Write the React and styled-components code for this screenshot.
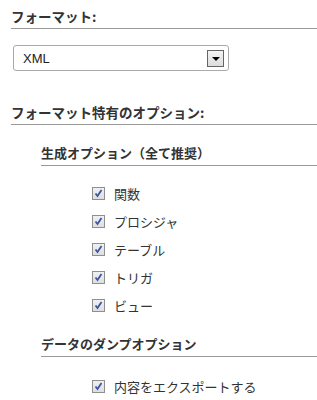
import React from "react";
import styled, { createGlobalStyle } from "styled-components";

const GlobalStyle = createGlobalStyle`
  body {
    margin: 0;
    background: #fff;
    font-family: "Noto Sans CJK JP", "Noto Sans", sans-serif;
    color: #333;
  }
`;

const Page = styled.div`
  width: 317px;
  height: 400px;
  overflow: hidden;
  padding: 7px 0 0 11px;
  box-sizing: border-box;
`;

const Heading = styled.div`
  font-size: ${({ fs }) => fs || "13px"};
  font-weight: bold;
  line-height: 18px;
  color: #333;
  padding-bottom: 3px;
  border-bottom: 1px solid #999;
  margin-left: ${({ indent }) => indent || "0"};
  margin-top: ${({ mt }) => mt || "0"};
`;

const SelectBox = styled.div`
  margin: 16px 0 0 2px;
  width: 216px;
  height: 26px;
  box-sizing: border-box;
  border: 1px solid #aaa;
  border-radius: 3px;
  display: flex;
  align-items: center;
  justify-content: space-between;
  padding: 0 4px 0 9px;
  font-family: "Liberation Sans", Arial, sans-serif;
  font-size: 13px;
  color: #222;
`;

const ArrowButton = styled.div`
  width: 17px;
  height: 17px;
  box-sizing: border-box;
  border: 1px solid #666;
  background: linear-gradient(#f4f4f4, #dcdcdc);
  display: flex;
  align-items: center;
  justify-content: center;
`;

const Arrow = styled.div`
  width: 0;
  height: 0;
  border-left: 4px solid transparent;
  border-right: 4px solid transparent;
  border-top: 4px solid #000;
  margin-top: 1px;
`;

const OptionList = styled.div`
  display: flex;
  flex-direction: column;
  gap: 9px;
  padding: ${({ pt }) => pt || "18px"} 0 0 81px;
`;

const OptionRow = styled.label`
  display: flex;
  align-items: center;
  gap: 9px;
  height: 19px;
  font-size: 13px;
  color: #333;
`;

const Box = styled.span`
  width: 13px;
  height: 13px;
  box-sizing: border-box;
  border: 1px solid #8f8f8f;
  background: linear-gradient(#f0f0f0, #dedede);
  display: flex;
  align-items: center;
  justify-content: center;
`;

const Check = () => (
  <svg width="9" height="9" viewBox="0 0 9 9">
    <path d="M1.5 4.5 L3.5 7 L7.5 1" fill="none" stroke="#3b55a6" strokeWidth="1.8" />
  </svg>
);

const Option = ({ label }) => (
  <OptionRow>
    <Box>
      <Check />
    </Box>
    {label}
  </OptionRow>
);

const App = () => {
  return (
    <Page>
      <GlobalStyle />
      <Heading fs="13.5px">フォーマット:</Heading>
      <SelectBox>
        XML
        <ArrowButton>
          <Arrow />
        </ArrowButton>
      </SelectBox>
      <Heading fs="13.5px" mt="32px">フォーマット特有のオプション:</Heading>
      <Heading indent="30px" mt="19px">生成オプション（全て推奨）</Heading>
      <OptionList>
        <Option label="関数" />
        <Option label="プロシジャ" />
        <Option label="テーブル" />
        <Option label="トリガ" />
        <Option label="ビュー" />
      </OptionList>
      <Heading indent="30px" mt="20px">データのダンプオプション</Heading>
      <OptionList pt="20px">
        <Option label="内容をエクスポートする" />
      </OptionList>
    </Page>
  );
};

export default App;
